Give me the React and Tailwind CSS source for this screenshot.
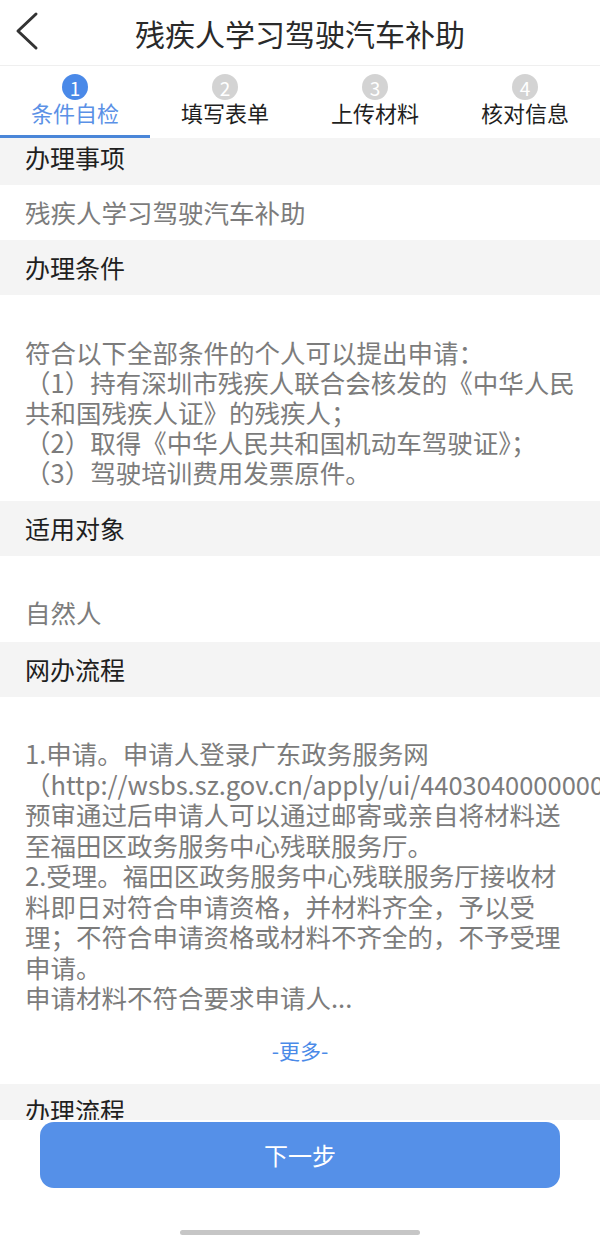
import React from 'react';

const steps = [
  { no: 1, label: '条件自检', active: true },
  { no: 2, label: '填写表单' },
  { no: 3, label: '上传材料' },
  { no: 4, label: '核对信息' },
];

const SectionTitle = ({ children }) => (
  <div className="h-[55px] bg-[#f4f4f4] flex items-center px-[25px] text-[25px] text-[#1f1f1f]">
    {children}
  </div>
);

export default function App() {
  return (
    <div
      className="w-full h-[1240px] bg-white flex flex-col overflow-hidden"
      style={{ fontFamily: '"Noto Sans CJK SC", "Noto Sans", sans-serif' }}
    >
      {/* header */}
      <div className="relative h-[66px] shrink-0 flex items-center justify-center border-b border-[#efefef]">
        <svg className="absolute left-[12px] top-[10px]" width="32" height="42" viewBox="0 0 32 42" fill="none">
          <polyline points="24,4 6,21 24,38" stroke="#333" strokeWidth="3" strokeLinecap="round" strokeLinejoin="round" />
        </svg>
        <div className="text-[30px] text-[#2a2a2a] leading-none">残疾人学习驾驶汽车补助</div>
      </div>

      {/* steps */}
      <div className="grid grid-cols-4 h-[72px] shrink-0">
        {steps.map(s => (
          <div key={s.no} className="relative flex flex-col items-center pt-[8px]">
            <div
              className={`w-[26px] h-[26px] rounded-full flex items-center justify-center text-white text-[19px] leading-none ${s.active ? 'bg-[#4a89e8]' : 'bg-[#d3d3d3]'}`}
            >
              {s.no}
            </div>
            <div className={`-mt-[3px] text-[22px] leading-[30px] ${s.active ? 'text-[#5b91e6]' : 'text-[#1f1f1f]'}`}>
              {s.label}
            </div>
            {s.active && <div className="absolute left-0 right-0 bottom-0 h-[3px] bg-[#4a86d8]" />}
          </div>
        ))}
      </div>

      {/* content */}
      <div className="flex-1 overflow-hidden">
        <div className="-mt-[8px]">
          <SectionTitle>办理事项</SectionTitle>
          <div className="h-[55px] flex items-center px-[25px] text-[25.5px] text-[#7c7c7c]">残疾人学习驾驶汽车补助</div>

          <SectionTitle>办理条件</SectionTitle>
          <div className="px-[25px] pt-[42px] pb-[14px] text-[25.5px] leading-[30px] text-[#7c7c7c]">
            符合以下全部条件的个人可以提出申请：<br />
            （1）持有深圳市残疾人联合会核发的《中华人民共和国残疾人证》的残疾人；<br />
            （2）取得《中华人民共和国机动车驾驶证》；<br />
            （3）驾驶培训费用发票原件。
          </div>

          <SectionTitle>适用对象</SectionTitle>
          <div className="px-[25px] pt-[41px] pb-[15px] text-[25.5px] leading-[30px] text-[#7c7c7c]">自然人</div>

          <SectionTitle>网办流程</SectionTitle>
          <div className="px-[25px] pt-[41px] text-[25.5px] leading-[30.5px] text-[#7c7c7c]">
            1.申请。申请人登录广东政务服务网<br />
            <span className="whitespace-nowrap">（http://wsbs.sz.gov.cn/apply/ui/4403040000000000）</span><br />
            预审通过后申请人可以通过邮寄或亲自将材料送至福田区政务服务中心残联服务厅。<br />
            2.受理。福田区政务服务中心残联服务厅接收材料即日对符合申请资格，并材料齐全，予以受理；不符合申请资格或材料不齐全的，不予受理申请。<br />
            申请材料不符合要求申请人...
          </div>
          <div className="h-[71px] pt-[6px] flex items-center justify-center text-[21px] text-[#4a8ae8]">-更多-</div>

          <SectionTitle>办理流程</SectionTitle>
        </div>
      </div>

      {/* footer */}
      <div className="h-[120px] shrink-0 bg-white flex flex-col items-center">
        <button className="mt-[2px] w-[520px] h-[66px] rounded-[14px] bg-[#5590e8] text-white text-[24px]">
          下一步
        </button>
        <div className="mt-[42px] w-[240px] h-[5px] rounded-full bg-[#c6c6c6]" />
      </div>
    </div>
  );
}
